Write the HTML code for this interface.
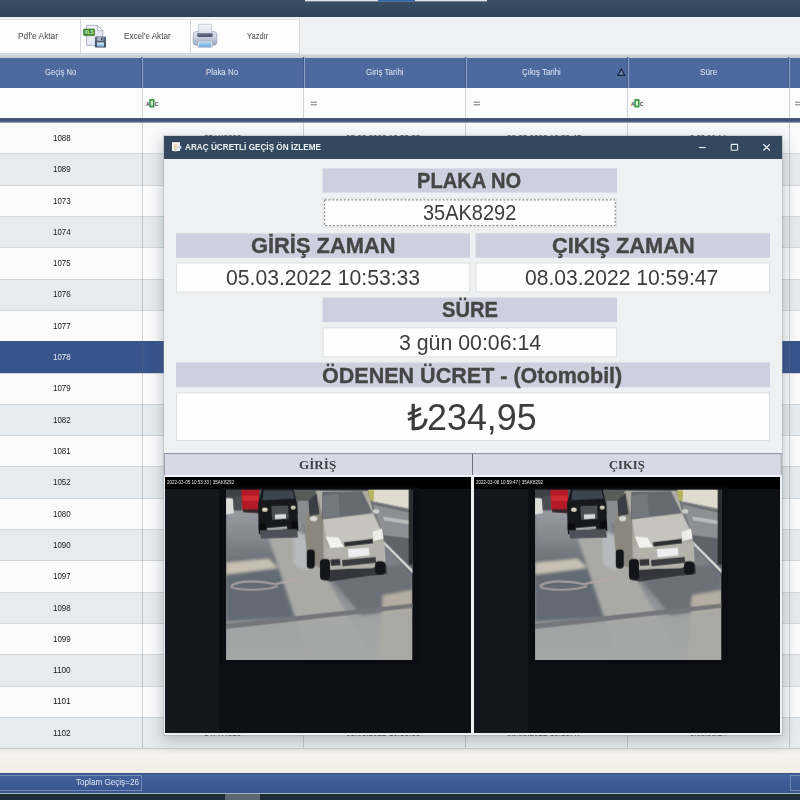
<!DOCTYPE html>
<html>
<head>
<meta charset="utf-8">
<title>Araç Ücretli Geçiş Ön İzleme</title>
<style>
*{box-sizing:border-box;margin:0;padding:0}
html,body{width:800px;height:800px;overflow:hidden}
body{position:relative;background:#eef0f1;font-family:"Liberation Sans",sans-serif;color:#222}
.abs{position:absolute}
.t{position:absolute;white-space:nowrap;line-height:1;transform-origin:0 0}
#topbar{left:0;top:0;width:800px;height:17px;background:linear-gradient(#3a4e66,#34485f 50%,#2f4358)}
#tab1{left:305px;top:0;width:182px;height:2px;background:linear-gradient(#dfe4e9 50%,rgba(223,228,233,.35) 50%)}
#tab2{left:378px;top:0;width:37px;height:2px;background:linear-gradient(#2f64a8 50%,rgba(47,100,168,.45) 50%)}
#tbline{left:0;top:54px;width:800px;height:4px;background:linear-gradient(#e2e5e8,#cdd2d7 40%,#c6ccd2)}
.btn{top:19px;height:35px;background:#fdfdfd;border:1px solid #d3d7da;border-top-color:#e3e6e8}
#hdr{left:0;top:58px;width:800px;height:30px;background:#4d6a9f}
.vsepH{top:57px;width:2px;height:31px;background:linear-gradient(90deg,#405785 50%,#8fa5cb 50%)}
#filter{left:0;top:88px;width:800px;height:31px;background:#fcfcfd}
#darksep{left:0;top:118px;width:800px;height:5px;background:linear-gradient(#4a5d7c,#3b4e6e 40%,#56688a 75%,#b9c2d0)}
.row{left:0;width:800px;border-top:1px solid #d0d6da}
.row.w{background:#fbfbfc}
.row.g{background:#e7ebed}
.row.s{background:#37548b;border-top-color:#37548b}
.vsep{top:88px;width:1px;height:660px;background:rgba(100,115,130,.30)}
#cream{left:0;top:748px;width:800px;height:25px;border-top:1px solid #c6cacd;background:linear-gradient(#e9e8e2,#f5f4ee 22%,#f3f1e8 70%,#f1eee3)}
#foot{left:0;top:773px;width:800px;height:20px;background:linear-gradient(#4564a0,#3d5c95 45%,#38558d);border-top:1px solid #32507f}
#bottom{left:0;top:793px;width:800px;height:7px;background:#1d2c36;border-top:1px solid #aab3bb}
#dlg{left:164px;top:136px;width:618px;height:599px;background:#eef0f1;box-shadow:0 0 0 1px rgba(150,158,166,.35),0 4px 13px 2px rgba(70,80,90,.30)}
#ttl{left:164px;top:136px;width:618px;height:23px;background:#33475f}
.lab{position:absolute;background:#cfd0df;height:24px}
.val{position:absolute;background:#fefefe;border:1px solid #dadde0;height:30px}
.gh{position:absolute;background:#d7d8e6;border-top:1px solid #8f909a;height:22px}
.cam{position:absolute;background:#0e1016;overflow:hidden}
</style>
</head>
<body>
<div id="topbar" class="abs"></div>
<div id="tab1" class="abs"></div>
<div id="tab2" class="abs"></div>
<div class="abs btn" style="left:-20px;width:101px"></div>
<div class="abs btn" style="left:80px;width:111px"></div>
<div class="abs btn" style="left:190px;width:110px"></div>
<div id="tbline" class="abs"></div>
<div id="hdr" class="abs"></div>
<div class="abs vsepH" style="left:141px"></div>
<div class="abs vsepH" style="left:303px"></div>
<div class="abs vsepH" style="left:465px"></div>
<div class="abs vsepH" style="left:627px"></div>
<div class="abs vsepH" style="left:788px"></div>
<svg class="abs" style="left:617px;top:68px" width="9" height="9" viewBox="0 0 9 9"><path d="M4.3 1.3 L7.7 7.3 H0.9 Z" fill="rgba(255,255,255,.22)" stroke="#18233c" stroke-width="1.25"/></svg>
<div id="filter" class="abs"></div>
<!-- filter row icons -->
<svg class="abs" style="left:145px;top:98px" width="14" height="10" viewBox="0 0 14 10">
  <rect x="4.2" y="1" width="5.4" height="8.4" rx="0.9" fill="#3c9a4a"/>
  <rect x="5.8" y="2.8" width="2.2" height="4.8" fill="#d6efd9"/>
  <text x="1" y="7.6" font-family="Liberation Sans" font-size="5" font-weight="bold" fill="#444">A</text>
  <text x="9.8" y="7.6" font-family="Liberation Sans" font-size="5" font-weight="bold" fill="#444">C</text>
</svg>
<svg class="abs" style="left:630px;top:98px" width="14" height="10" viewBox="0 0 14 10">
  <rect x="4.2" y="1" width="5.4" height="8.4" rx="0.9" fill="#3c9a4a"/>
  <rect x="5.8" y="2.8" width="2.2" height="4.8" fill="#d6efd9"/>
  <text x="1" y="7.6" font-family="Liberation Sans" font-size="5" font-weight="bold" fill="#444">A</text>
  <text x="9.8" y="7.6" font-family="Liberation Sans" font-size="5" font-weight="bold" fill="#444">C</text>
</svg>
<svg class="abs" style="left:298.5px;top:95.5px" width="502" height="14" viewBox="0 0 500 14" stroke="#666" stroke-width="0.9">
  <path d="M10.6 6.2 H17 M10.6 8.8 H17"/>
  <path d="M173.6 6.2 H180 M173.6 8.8 H180"/>
  <path d="M495 6.2 H501 M495 8.8 H501"/>
</svg>
<!-- excel icon -->
<svg class="abs" style="left:82px;top:23px" width="26" height="26" viewBox="0 0 26 26">
  <defs>
    <linearGradient id="pg" x1="0" y1="0" x2="1" y2="1"><stop offset="0" stop-color="#f4f5fa"/><stop offset="1" stop-color="#dcdff0"/></linearGradient>
    <linearGradient id="fl" x1="0" y1="0" x2="0" y2="1"><stop offset="0" stop-color="#5f6b7e"/><stop offset="1" stop-color="#39455a"/></linearGradient>
    <linearGradient id="bl" x1="0" y1="0" x2="0" y2="1"><stop offset="0" stop-color="#d8ecf8"/><stop offset="1" stop-color="#7fb4d8"/></linearGradient>
  </defs>
  <path d="M4.6 2.4 H15.4 L20.8 7.6 V22.4 H4.6 Z" fill="url(#pg)" stroke="#a9aec2" stroke-width="0.9"/>
  <path d="M15.4 2.4 V7.6 H20.8 Z" fill="#f8f9fc" stroke="#a9aec2" stroke-width="0.8"/>
  <rect x="1.6" y="6" width="11" height="6.6" rx="0.8" fill="#3f8a28" stroke="#2f6d1d" stroke-width="0.6"/>
  <text x="7.1" y="11.2" font-family="Liberation Sans" font-weight="bold" font-size="4.8" fill="#d4ecc4" text-anchor="middle">XLS</text>
  <rect x="13" y="13.6" width="11" height="10.8" rx="1" fill="url(#fl)"/>
  <rect x="15.2" y="14.2" width="6.2" height="3.6" fill="#aab4c6"/>
  <rect x="19" y="14.7" width="1.5" height="2.4" fill="#39455a"/>
  <rect x="14.9" y="19.4" width="7.2" height="4.2" fill="url(#bl)"/>
</svg>
<!-- printer icon -->
<svg class="abs" style="left:192px;top:23px" width="26" height="26" viewBox="0 0 26 26">
  <defs>
    <linearGradient id="pp" x1="0" y1="0" x2="0" y2="1"><stop offset="0" stop-color="#f7f8fc"/><stop offset="1" stop-color="#d9dcec"/></linearGradient>
    <linearGradient id="pb" x1="0" y1="0" x2="0" y2="1"><stop offset="0" stop-color="#e4e8f2"/><stop offset="0.5" stop-color="#c3cadb"/><stop offset="1" stop-color="#9aa5be"/></linearGradient>
    <linearGradient id="ps" x1="0" y1="0" x2="0" y2="1"><stop offset="0" stop-color="#6c7690"/><stop offset="1" stop-color="#4a546e"/></linearGradient>
    <linearGradient id="pt" x1="0" y1="0" x2="0" y2="1"><stop offset="0" stop-color="#bfe0f6"/><stop offset="1" stop-color="#5fa5dc"/></linearGradient>
  </defs>
  <rect x="1.2" y="8.6" width="23.6" height="13.6" rx="3" fill="url(#pb)" stroke="#97a1b8" stroke-width="0.7"/>
  <rect x="6.4" y="1.3" width="13.2" height="9.4" rx="0.8" fill="url(#pp)" stroke="#b3b8cb" stroke-width="0.7"/>
  <path d="M5.2 10.2 H20.8 V12.6 Q20.8 14 19.4 14 H6.6 Q5.2 14 5.2 12.6 Z" fill="url(#ps)"/>
  <rect x="5.6" y="18.2" width="14.8" height="6.2" rx="0.8" fill="#e6eaf2" stroke="#9aa4bb" stroke-width="0.6"/>
  <rect x="6.8" y="18.8" width="12.4" height="5" fill="url(#pt)"/>
</svg>
<span class="t" style="left:17.55px;top:32px;font-size:9px;color:#454545;transform:scaleX(0.9258);">Pdf'e Aktar</span>
<span class="t" style="left:123.87px;top:32px;font-size:9px;color:#454545;transform:scaleX(0.9011);">Excel'e Aktar</span>
<span class="t" style="left:247.38px;top:32px;font-size:9px;color:#454545;transform:scaleX(0.8347);">Yazdır</span>
<span class="t" style="left:44.84px;top:68px;font-size:8.8px;color:#e4e9f2;transform:scaleX(0.8639);">Geçiş No</span>
<span class="t" style="left:206.18px;top:68px;font-size:8.8px;color:#e4e9f2;transform:scaleX(0.8972);">Plaka No</span>
<span class="t" style="left:365.62px;top:68px;font-size:8.8px;color:#e4e9f2;transform:scaleX(0.9096);">Giriş Tarihi</span>
<span class="t" style="left:522.43px;top:68px;font-size:8.8px;color:#e4e9f2;transform:scaleX(0.8959);">Çıkış Tarihi</span>
<span class="t" style="left:699.54px;top:68px;font-size:8.8px;color:#e4e9f2;transform:scaleX(0.9300);">Süre</span>
<div class="abs row w" style="top:122px;height:31px"></div>
<div class="abs row g" style="top:153px;height:32px"></div>
<div class="abs row w" style="top:185px;height:31px"></div>
<div class="abs row g" style="top:216px;height:31px"></div>
<div class="abs row w" style="top:247px;height:32px"></div>
<div class="abs row g" style="top:279px;height:31px"></div>
<div class="abs row w" style="top:310px;height:31px"></div>
<div class="abs row s" style="top:341px;height:32px"></div>
<div class="abs row w" style="top:373px;height:31px"></div>
<div class="abs row g" style="top:404px;height:31px"></div>
<div class="abs row w" style="top:435px;height:31px"></div>
<div class="abs row g" style="top:466px;height:32px"></div>
<div class="abs row w" style="top:498px;height:31px"></div>
<div class="abs row g" style="top:529px;height:31px"></div>
<div class="abs row w" style="top:560px;height:32px"></div>
<div class="abs row g" style="top:592px;height:31px"></div>
<div class="abs row w" style="top:623px;height:31px"></div>
<div class="abs row g" style="top:654px;height:32px"></div>
<div class="abs row w" style="top:686px;height:31px"></div>
<div class="abs row g" style="top:717px;height:31px"></div>
<span class="t" style="left:52.70px;top:134px;font-size:8.4px;color:#161616;transform:scaleX(0.9483);">1088</span>
<span class="t" style="left:204.25px;top:134px;font-size:8.4px;color:#161616;transform:scaleX(0.9577);">35AK8292</span>
<span class="t" style="left:345.75px;top:134px;font-size:8.4px;color:#161616;transform:scaleX(0.9677);">05.03.2022 10:53:33</span>
<span class="t" style="left:506.75px;top:134px;font-size:8.4px;color:#161616;transform:scaleX(0.9677);">08.03.2022 10:59:47</span>
<span class="t" style="left:689.76px;top:134px;font-size:8.4px;color:#161616;transform:scaleX(0.9176);">3.00:06:14</span>
<span class="t" style="left:52.70px;top:165px;font-size:8.4px;color:#161616;transform:scaleX(0.9483);">1089</span>
<span class="t" style="left:204.25px;top:165px;font-size:8.4px;color:#161616;transform:scaleX(0.9432);">35KR1044</span>
<span class="t" style="left:345.75px;top:165px;font-size:8.4px;color:#161616;transform:scaleX(0.9677);">05.03.2022 10:53:33</span>
<span class="t" style="left:506.75px;top:165px;font-size:8.4px;color:#161616;transform:scaleX(0.9677);">08.03.2022 10:59:47</span>
<span class="t" style="left:689.76px;top:165px;font-size:8.4px;color:#161616;transform:scaleX(0.9176);">3.00:06:14</span>
<span class="t" style="left:52.70px;top:197px;font-size:8.4px;color:#161616;transform:scaleX(0.9483);">1073</span>
<span class="t" style="left:204.25px;top:197px;font-size:8.4px;color:#161616;transform:scaleX(0.9354);">35BTC702</span>
<span class="t" style="left:345.75px;top:197px;font-size:8.4px;color:#161616;transform:scaleX(0.9677);">05.03.2022 10:53:33</span>
<span class="t" style="left:506.75px;top:197px;font-size:8.4px;color:#161616;transform:scaleX(0.9677);">08.03.2022 10:59:47</span>
<span class="t" style="left:689.76px;top:197px;font-size:8.4px;color:#161616;transform:scaleX(0.9176);">3.00:06:14</span>
<span class="t" style="left:52.71px;top:228px;font-size:8.4px;color:#161616;transform:scaleX(0.9414);">1074</span>
<span class="t" style="left:204.25px;top:228px;font-size:8.4px;color:#161616;transform:scaleX(0.9577);">35AEL318</span>
<span class="t" style="left:345.75px;top:228px;font-size:8.4px;color:#161616;transform:scaleX(0.9677);">05.03.2022 10:53:33</span>
<span class="t" style="left:506.75px;top:228px;font-size:8.4px;color:#161616;transform:scaleX(0.9677);">08.03.2022 10:59:47</span>
<span class="t" style="left:689.76px;top:228px;font-size:8.4px;color:#161616;transform:scaleX(0.9176);">3.00:06:14</span>
<span class="t" style="left:52.70px;top:259px;font-size:8.4px;color:#161616;transform:scaleX(0.9483);">1075</span>
<span class="t" style="left:204.26px;top:259px;font-size:8.4px;color:#161616;transform:scaleX(0.9244);">35CKP551</span>
<span class="t" style="left:345.75px;top:259px;font-size:8.4px;color:#161616;transform:scaleX(0.9677);">05.03.2022 10:53:33</span>
<span class="t" style="left:506.75px;top:259px;font-size:8.4px;color:#161616;transform:scaleX(0.9677);">08.03.2022 10:59:47</span>
<span class="t" style="left:689.76px;top:259px;font-size:8.4px;color:#161616;transform:scaleX(0.9176);">3.00:06:14</span>
<span class="t" style="left:52.70px;top:290px;font-size:8.4px;color:#161616;transform:scaleX(0.9483);">1076</span>
<span class="t" style="left:204.25px;top:290px;font-size:8.4px;color:#161616;transform:scaleX(0.9432);">35NV2260</span>
<span class="t" style="left:345.75px;top:290px;font-size:8.4px;color:#161616;transform:scaleX(0.9677);">05.03.2022 10:53:33</span>
<span class="t" style="left:506.75px;top:290px;font-size:8.4px;color:#161616;transform:scaleX(0.9677);">08.03.2022 10:59:47</span>
<span class="t" style="left:689.76px;top:290px;font-size:8.4px;color:#161616;transform:scaleX(0.9176);">3.00:06:14</span>
<span class="t" style="left:52.70px;top:322px;font-size:8.4px;color:#161616;transform:scaleX(0.9483);">1077</span>
<span class="t" style="left:204.25px;top:322px;font-size:8.4px;color:#161616;transform:scaleX(0.9618);">35AYZ917</span>
<span class="t" style="left:345.75px;top:322px;font-size:8.4px;color:#161616;transform:scaleX(0.9677);">05.03.2022 10:53:33</span>
<span class="t" style="left:506.75px;top:322px;font-size:8.4px;color:#161616;transform:scaleX(0.9677);">08.03.2022 10:59:47</span>
<span class="t" style="left:689.76px;top:322px;font-size:8.4px;color:#161616;transform:scaleX(0.9176);">3.00:06:14</span>
<span class="t" style="left:52.70px;top:353px;font-size:8.4px;color:#e4e9f2;transform:scaleX(0.9483);">1078</span>
<span class="t" style="left:204.25px;top:353px;font-size:8.4px;color:#e4e9f2;transform:scaleX(0.9577);">35AK8292</span>
<span class="t" style="left:345.75px;top:353px;font-size:8.4px;color:#e4e9f2;transform:scaleX(0.9677);">05.03.2022 10:53:33</span>
<span class="t" style="left:506.75px;top:353px;font-size:8.4px;color:#e4e9f2;transform:scaleX(0.9677);">08.03.2022 10:59:47</span>
<span class="t" style="left:689.76px;top:353px;font-size:8.4px;color:#e4e9f2;transform:scaleX(0.9176);">3.00:06:14</span>
<span class="t" style="left:52.70px;top:384px;font-size:8.4px;color:#161616;transform:scaleX(0.9483);">1079</span>
<span class="t" style="left:204.26px;top:384px;font-size:8.4px;color:#161616;transform:scaleX(0.9138);">35BHU463</span>
<span class="t" style="left:345.75px;top:384px;font-size:8.4px;color:#161616;transform:scaleX(0.9677);">05.03.2022 10:53:33</span>
<span class="t" style="left:506.75px;top:384px;font-size:8.4px;color:#161616;transform:scaleX(0.9677);">08.03.2022 10:59:47</span>
<span class="t" style="left:689.76px;top:384px;font-size:8.4px;color:#161616;transform:scaleX(0.9176);">3.00:06:14</span>
<span class="t" style="left:52.70px;top:416px;font-size:8.4px;color:#161616;transform:scaleX(0.9483);">1082</span>
<span class="t" style="left:204.25px;top:416px;font-size:8.4px;color:#161616;transform:scaleX(0.9464);">35AR5107</span>
<span class="t" style="left:345.75px;top:416px;font-size:8.4px;color:#161616;transform:scaleX(0.9677);">05.03.2022 10:53:33</span>
<span class="t" style="left:506.75px;top:416px;font-size:8.4px;color:#161616;transform:scaleX(0.9677);">08.03.2022 10:59:47</span>
<span class="t" style="left:689.76px;top:416px;font-size:8.4px;color:#161616;transform:scaleX(0.9176);">3.00:06:14</span>
<span class="t" style="left:52.70px;top:447px;font-size:8.4px;color:#161616;transform:scaleX(0.9483);">1081</span>
<span class="t" style="left:204.25px;top:447px;font-size:8.4px;color:#161616;transform:scaleX(0.9464);">35DS7725</span>
<span class="t" style="left:345.75px;top:447px;font-size:8.4px;color:#161616;transform:scaleX(0.9677);">05.03.2022 10:53:33</span>
<span class="t" style="left:506.75px;top:447px;font-size:8.4px;color:#161616;transform:scaleX(0.9677);">08.03.2022 10:59:47</span>
<span class="t" style="left:689.76px;top:447px;font-size:8.4px;color:#161616;transform:scaleX(0.9176);">3.00:06:14</span>
<span class="t" style="left:52.70px;top:478px;font-size:8.4px;color:#161616;transform:scaleX(0.9483);">1052</span>
<span class="t" style="left:204.26px;top:478px;font-size:8.4px;color:#161616;transform:scaleX(0.9244);">35CBE138</span>
<span class="t" style="left:345.75px;top:478px;font-size:8.4px;color:#161616;transform:scaleX(0.9677);">05.03.2022 10:53:33</span>
<span class="t" style="left:506.75px;top:478px;font-size:8.4px;color:#161616;transform:scaleX(0.9677);">08.03.2022 10:59:47</span>
<span class="t" style="left:689.76px;top:478px;font-size:8.4px;color:#161616;transform:scaleX(0.9176);">3.00:06:14</span>
<span class="t" style="left:52.71px;top:510px;font-size:8.4px;color:#161616;transform:scaleX(0.9414);">1080</span>
<span class="t" style="left:204.26px;top:510px;font-size:8.4px;color:#161616;transform:scaleX(0.9323);">35AFN640</span>
<span class="t" style="left:345.75px;top:510px;font-size:8.4px;color:#161616;transform:scaleX(0.9677);">05.03.2022 10:53:33</span>
<span class="t" style="left:506.75px;top:510px;font-size:8.4px;color:#161616;transform:scaleX(0.9677);">08.03.2022 10:59:47</span>
<span class="t" style="left:689.76px;top:510px;font-size:8.4px;color:#161616;transform:scaleX(0.9176);">3.00:06:14</span>
<span class="t" style="left:52.71px;top:541px;font-size:8.4px;color:#161616;transform:scaleX(0.9414);">1090</span>
<span class="t" style="left:204.24px;top:541px;font-size:8.4px;color:#161616;transform:scaleX(0.9814);">35KL9032</span>
<span class="t" style="left:345.75px;top:541px;font-size:8.4px;color:#161616;transform:scaleX(0.9677);">05.03.2022 10:53:33</span>
<span class="t" style="left:506.75px;top:541px;font-size:8.4px;color:#161616;transform:scaleX(0.9677);">08.03.2022 10:59:47</span>
<span class="t" style="left:689.76px;top:541px;font-size:8.4px;color:#161616;transform:scaleX(0.9176);">3.00:06:14</span>
<span class="t" style="left:52.70px;top:572px;font-size:8.4px;color:#161616;transform:scaleX(0.9483);">1097</span>
<span class="t" style="left:204.26px;top:572px;font-size:8.4px;color:#161616;transform:scaleX(0.9321);">35BPV274</span>
<span class="t" style="left:345.75px;top:572px;font-size:8.4px;color:#161616;transform:scaleX(0.9677);">05.03.2022 10:53:33</span>
<span class="t" style="left:506.75px;top:572px;font-size:8.4px;color:#161616;transform:scaleX(0.9677);">08.03.2022 10:59:47</span>
<span class="t" style="left:689.76px;top:572px;font-size:8.4px;color:#161616;transform:scaleX(0.9176);">3.00:06:14</span>
<span class="t" style="left:52.70px;top:604px;font-size:8.4px;color:#161616;transform:scaleX(0.9483);">1098</span>
<span class="t" style="left:204.24px;top:604px;font-size:8.4px;color:#161616;transform:scaleX(0.9857);">35AT6186</span>
<span class="t" style="left:345.75px;top:604px;font-size:8.4px;color:#161616;transform:scaleX(0.9677);">05.03.2022 10:53:33</span>
<span class="t" style="left:506.75px;top:604px;font-size:8.4px;color:#161616;transform:scaleX(0.9677);">08.03.2022 10:59:47</span>
<span class="t" style="left:689.76px;top:604px;font-size:8.4px;color:#161616;transform:scaleX(0.9176);">3.00:06:14</span>
<span class="t" style="left:52.70px;top:635px;font-size:8.4px;color:#161616;transform:scaleX(0.9483);">1099</span>
<span class="t" style="left:204.26px;top:635px;font-size:8.4px;color:#161616;transform:scaleX(0.9138);">35CDY805</span>
<span class="t" style="left:345.75px;top:635px;font-size:8.4px;color:#161616;transform:scaleX(0.9677);">05.03.2022 10:53:33</span>
<span class="t" style="left:506.75px;top:635px;font-size:8.4px;color:#161616;transform:scaleX(0.9677);">08.03.2022 10:59:47</span>
<span class="t" style="left:689.76px;top:635px;font-size:8.4px;color:#161616;transform:scaleX(0.9176);">3.00:06:14</span>
<span class="t" style="left:52.69px;top:666px;font-size:8.4px;color:#161616;transform:scaleX(0.9752);">1100</span>
<span class="t" style="left:204.26px;top:666px;font-size:8.4px;color:#161616;transform:scaleX(0.9138);">35NM3391</span>
<span class="t" style="left:345.75px;top:666px;font-size:8.4px;color:#161616;transform:scaleX(0.9677);">05.03.2022 10:53:33</span>
<span class="t" style="left:506.75px;top:666px;font-size:8.4px;color:#161616;transform:scaleX(0.9677);">08.03.2022 10:59:47</span>
<span class="t" style="left:689.76px;top:666px;font-size:8.4px;color:#161616;transform:scaleX(0.9176);">3.00:06:14</span>
<span class="t" style="left:52.68px;top:697px;font-size:8.4px;color:#161616;transform:scaleX(0.9827);">1101</span>
<span class="t" style="left:204.25px;top:697px;font-size:8.4px;color:#161616;transform:scaleX(0.9696);">35BJE529</span>
<span class="t" style="left:345.75px;top:697px;font-size:8.4px;color:#161616;transform:scaleX(0.9677);">05.03.2022 10:53:33</span>
<span class="t" style="left:506.75px;top:697px;font-size:8.4px;color:#161616;transform:scaleX(0.9677);">08.03.2022 10:59:47</span>
<span class="t" style="left:689.76px;top:697px;font-size:8.4px;color:#161616;transform:scaleX(0.9176);">3.00:06:14</span>
<span class="t" style="left:52.68px;top:729px;font-size:8.4px;color:#161616;transform:scaleX(0.9827);">1102</span>
<span class="t" style="left:204.25px;top:729px;font-size:8.4px;color:#161616;transform:scaleX(0.9663);">34FK4820</span>
<span class="t" style="left:345.75px;top:729px;font-size:8.4px;color:#161616;transform:scaleX(0.9677);">05.03.2022 10:53:33</span>
<span class="t" style="left:506.75px;top:729px;font-size:8.4px;color:#161616;transform:scaleX(0.9677);">08.03.2022 10:59:47</span>
<span class="t" style="left:689.76px;top:729px;font-size:8.4px;color:#161616;transform:scaleX(0.9176);">3.00:06:14</span>
<div class="abs vsep" style="left:142px"></div><div class="abs vsep" style="left:303px"></div><div class="abs vsep" style="left:465px"></div><div class="abs vsep" style="left:627px"></div><div class="abs vsep" style="left:789px"></div>
<div id="darksep" class="abs"></div>
<div id="cream" class="abs"></div>
<div id="foot" class="abs">
  <div class="abs" style="left:-5px;top:1px;width:147px;height:16px;border:1px solid #6f88b6"></div>
  <div class="abs" style="left:790px;top:1px;width:20px;height:16px;border:1px solid #6f88b6"></div>
</div>
<div id="bottom" class="abs"><div class="abs" style="left:225px;top:0;width:35px;height:7px;background:#5b6870"></div></div>
<span class="t" style="left:76.27px;top:778px;font-size:8.8px;color:#e4e9f2;transform:scaleX(0.9226);">Toplam Geçiş=26</span>
<div id="dlg" class="abs"></div>
<div id="ttl" class="abs"></div>
<svg class="abs" style="left:164px;top:136px" width="618" height="598" viewBox="164 136 618 598">
  <g fill="#cfd0df">
    <rect x="322.5" y="168.4" width="294.5" height="24.2"/>
    <rect x="176" y="233.3" width="294" height="24.4"/>
    <rect x="475.6" y="233.3" width="294.4" height="24.4"/>
    <rect x="322.5" y="297.5" width="294.5" height="24.6"/>
    <rect x="176" y="362.5" width="594" height="24.8"/>
  </g>
  <g fill="#fefefe" stroke="#dcdfe2" stroke-width="1">
    <rect x="323" y="198.3" width="293.6" height="28.8"/>
    <rect x="176.5" y="263" width="293.2" height="29"/>
    <rect x="476" y="263" width="293.6" height="29"/>
    <rect x="323" y="327.8" width="293.6" height="29"/>
    <rect x="176.5" y="392.8" width="593" height="47.8"/>
  </g>
  <rect x="324.6" y="199.9" width="290.6" height="25.8" fill="none" stroke="#6a6a6a" stroke-width="0.9" stroke-dasharray="2.2 1.6"/>
  <!-- group headers -->
  <rect x="164" y="453.4" width="617.6" height="21.8" fill="#d8d9e6"/>
  <path d="M164 453.6 H781.6" stroke="#8e8f99" stroke-width="1"/>
  <path d="M164.5 453.4 V475 M781.2 453.4 V475" stroke="#a0a1ab" stroke-width="1"/>
  <path d="M472.6 453.4 V475" stroke="#6d6e78" stroke-width="1.2"/>
  <path d="M473.8 454 V475" stroke="#eeeef4" stroke-width="0.8"/>
  <path d="M164 475.8 H781.6" stroke="#f7f7f9" stroke-width="1.2"/>
</svg>
<div class="cam" style="left:165px;top:477px;width:306px;height:256px"><div class="abs" style="left:0;top:0;width:54px;height:256px;background:#14171d"></div><div class="abs" style="left:0;top:0;width:306px;height:12px;background:#000"></div></div>
<div class="cam" style="left:474px;top:477px;width:306px;height:256px"><div class="abs" style="left:0;top:0;width:54px;height:256px;background:#14171d"></div><div class="abs" style="left:0;top:0;width:306px;height:12px;background:#000"></div></div>
<svg class="abs" style="left:690px;top:136px" width="92" height="23" viewBox="0 0 92 23" fill="none" stroke="#e9edf2" stroke-width="1.1">
  <path d="M9 11.5 H15.8"/>
  <rect x="41.2" y="8.4" width="6.4" height="5.8" rx="0.8"/>
  <path d="M73.4 8.3 L79.8 14.5 M79.8 8.3 L73.4 14.5" stroke-width="1.2"/>
</svg>
<svg class="abs" style="left:171px;top:141px" width="12" height="12" viewBox="0 0 12 12">
  <rect x="1" y="1.2" width="8" height="8.8" fill="#f3f4f6"/>
  <rect x="2.6" y="3" width="4" height="5.2" fill="#e4d9b8"/>
  <rect x="3.6" y="8" width="2" height="2.6" fill="#d9cfae"/>
  <circle cx="8.9" cy="6.5" r="1.7" fill="#bcd8f2"/>
</svg>
<svg width="0" height="0" style="position:absolute">
  <defs>
    <filter id="bl" x="-5%" y="-5%" width="110%" height="110%"><feGaussianBlur stdDeviation="3.2"/></filter>
    <filter id="bl2" x="-5%" y="-5%" width="110%" height="110%"><feGaussianBlur stdDeviation="7"/></filter>
    <clipPath id="pc"><rect x="42" y="18" width="710" height="649"/></clipPath>
    <linearGradient id="rd" x1="0" y1="0" x2="0" y2="1"><stop offset="0" stop-color="#6f747b"/><stop offset="0.45" stop-color="#7d8187"/><stop offset="0.8" stop-color="#9c9e9f"/><stop offset="1" stop-color="#a6a8a8"/></linearGradient>
    <linearGradient id="ul" gradientUnits="userSpaceOnUse" x1="0" y1="95" x2="0" y2="290"><stop offset="0" stop-color="#979ba1"/><stop offset="0.55" stop-color="#83878e"/><stop offset="1" stop-color="#6c7178"/></linearGradient>
    <g id="photo">
      <rect x="18" y="10" width="760" height="672" fill="#0b0d12"/>
      <g clip-path="url(#pc)">
        <rect x="42" y="18" width="710" height="649" fill="url(#rd)"/>
        <g filter="url(#bl2)">
          <polygon points="42,95 330,95 345,300 42,300" fill="url(#ul)"/>
          <polygon points="42,335 330,300 420,500 42,520" fill="#646a73"/>
          <polygon points="200,190 330,180 600,667 360,667" fill="#a9a9a6"/>
          <polygon points="420,330 752,300 752,470 560,500" fill="#6d7077"/>
          <polygon points="640,420 752,400 752,667 620,667" fill="#b3aea1"/>
          <polygon points="42,550 752,475 752,667 42,667" fill="#a4a6a6" opacity=".75"/>
          <polygon points="42,296 205,281 240,316 42,341" fill="#c6c1b2"/>
          <polygon points="300,180 348,190 350,330 300,300" fill="#b7babc"/>
        </g>
        <g filter="url(#bl)">
          <polygon points="42,528 752,452 752,468 42,548" fill="#74767a"/>
          <path d="M60 385 C90 360 180 365 230 378 C280 365 330 360 345 350" fill="none" stroke="#b5aaab" stroke-width="8" opacity=".8"/>
          <path d="M60 388 C100 405 200 400 240 385" fill="none" stroke="#b5aaab" stroke-width="7" opacity=".8"/>
          <!-- background top -->
          <polygon points="42,18 752,18 752,60 42,60" fill="#4c5258"/>
          <polygon points="300,18 400,18 345,120 312,112" fill="#565c58"/>
          <polygon points="315,60 385,60 345,150 318,135" fill="#8a8d90"/>
          <!-- right pavement -->
          <polygon points="585,18 752,18 752,92 600,62" fill="#e0dccd"/>
          <polygon points="583,20 606,20 604,62 588,58" fill="#b4b45c"/>
          <polygon points="600,62 752,92 752,335 640,190" fill="#8d8f92"/>
          <polygon points="640,190 752,205 752,345 655,240" fill="#5f6268"/>
          <polygon points="600,66 752,98 752,108 604,74" fill="#6a6d70"/>
          <polygon points="645,215 752,322 752,336 645,228" fill="#d6d6d2"/>
          <polygon points="640,120 740,135 742,150 645,135" fill="#b9bbbb"/>
          <rect x="738" y="18" width="16" height="285" fill="#2a2c2e"/>
          <!-- far left cars -->
          <polygon points="42,48 68,52 72,108 42,112" fill="#dcdcd8"/>
          <polygon points="68,36 102,36 102,96 72,96" fill="#4a4c52"/>
          <polygon points="42,18 100,18 100,40 42,50" fill="#3e4248"/>
          <!-- red van -->
          <polygon points="100,18 168,18 168,96 104,96" fill="#b31a26"/>
          <polygon points="104,40 165,40 165,62 104,60" fill="#cf2a36"/>
          <polygon points="106,92 168,92 168,108 108,104" fill="#3a2326"/>
          <!-- black car -->
          <polygon points="178,18 300,18 312,70 318,172 300,182 182,188 166,170 164,70" fill="#17181b"/>
          <polygon points="186,20 296,20 303,52 180,58" fill="#3d444d"/>
          <polygon points="214,80 279,78 281,129 218,133" fill="#4c4e53"/>
          <polygon points="197,164 274,157 276,168 199,176" fill="#a6a6a6"/>
          <polygon points="228,112 270,110 271,128 229,130" fill="#d9dadc"/>
          <ellipse cx="190" cy="94" rx="11" ry="8" fill="#d8d4bc"/>
          <ellipse cx="298" cy="86" rx="10" ry="8" fill="#c9c6b4"/>
          <rect x="167" y="146" width="27" height="42" rx="7" fill="#0c0c0e"/>
          <rect x="291" y="136" width="24" height="40" rx="7" fill="#0c0c0e"/>
          <!-- shadow under silver car -->
          <polygon points="400,330 652,300 655,338 560,350 440,368 405,360" fill="#34363a"/>
          <polygon points="170,172 312,168 316,200 176,204" fill="#4d5056"/>
          <!-- silver car -->
          <polygon points="385,22 582,22 604,108 640,188 648,290 600,316 420,322 352,292 344,180 348,118" fill="#adaba3"/>
          <polygon points="348,118 385,22 412,130 414,322 352,292 344,180" fill="#8a877e"/>
          <polygon points="356,60 386,30 398,110 360,118" fill="#3a3e44"/>
          <polygon points="409,26 560,23 600,107 407,130" fill="#666a70"/>
          <polygon points="412,40 470,34 476,118 410,126" fill="#7c8085" opacity=".7"/>
          <polygon points="412,132 602,110 640,190 560,212 470,218 424,200" fill="#c5c4be"/>
          <polygon points="420,238 646,214 650,290 600,316 422,322" fill="#b3b2ab"/>
          <polygon points="422,196 470,200 492,236 440,240" fill="#f1f1ee"/>
          <polygon points="600,178 636,166 642,204 604,214" fill="#ecece9"/>
          <polygon points="492,218 600,206 602,222 494,234" fill="#2c2e32"/>
          <polygon points="506,244 586,239 589,268 509,276" fill="#ecedef"/>
          <polygon points="484,286 612,274 614,296 486,310" fill="#3a3c40"/>
          <polygon points="440,284 476,282 478,306 442,308" fill="#33353a"/>
          <rect x="350" y="246" width="30" height="72" rx="12" fill="#141518"/>
          <rect x="400" y="282" width="38" height="80" rx="14" fill="#141518"/>
          <rect x="610" y="290" width="38" height="52" rx="14" fill="#141518"/>
          <ellipse cx="376" cy="128" rx="14" ry="10" fill="#d7d7d3"/>
          <ellipse cx="614" cy="100" rx="12" ry="9" fill="#cfcfcb"/>
        </g>
      </g>
    </g>
  </defs>
</svg>
<svg class="abs" style="left:215px;top:485px" width="210" height="185" viewBox="0 0 800 705"><use href="#photo"/></svg>
<svg class="abs" style="left:524px;top:485px" width="210" height="185" viewBox="0 0 800 705"><use href="#photo"/></svg>
<!-- lira sign -->
<svg class="abs" style="left:405px;top:402px" width="24" height="30" viewBox="0 0 24 30" fill="none" stroke="#3c3c3c">
  <path d="M8.2 1.8 V28.2" stroke-width="3.3"/>
  <path d="M3 12.2 L16 6.2 M3 17.7 L16 11.7" stroke-width="2.7"/>
  <path d="M8.2 26.6 H10.5 C16.5 26.6 20.6 22.6 21 16.6" stroke-width="3.2"/>
</svg>
<span class="t" style="left:185.47px;top:143px;font-size:8.8px;color:#f1f3f6;font-weight:bold;transform:scaleX(0.9300);">ARAÇ ÜCRETLİ GEÇİŞ ÖN İZLEME</span>
<span class="t" style="left:417.24px;top:170px;font-size:21.2px;color:#464646;font-weight:bold;transform:scaleX(0.9477);-webkit-text-stroke:0.35px #464646;">PLAKA NO</span>
<span class="t" style="left:422.98px;top:203px;font-size:21.4px;color:#3c3c3c;transform:scaleX(0.9337);">35AK8292</span>
<span class="t" style="left:250.52px;top:235px;font-size:21.2px;color:#464646;font-weight:bold;transform:scaleX(1.0312);-webkit-text-stroke:0.35px #464646;">GİRİŞ ZAMAN</span>
<span class="t" style="left:551.72px;top:235px;font-size:21.2px;color:#464646;font-weight:bold;transform:scaleX(1.0270);-webkit-text-stroke:0.35px #464646;">ÇIKIŞ ZAMAN</span>
<span class="t" style="left:226.14px;top:268px;font-size:21.4px;color:#3c3c3c;transform:scaleX(0.9891);">05.03.2022 10:53:33</span>
<span class="t" style="left:525.34px;top:268px;font-size:21.4px;color:#3c3c3c;transform:scaleX(0.9845);">08.03.2022 10:59:47</span>
<span class="t" style="left:441.59px;top:299px;font-size:21.2px;color:#464646;font-weight:bold;transform:scaleX(0.9498);-webkit-text-stroke:0.35px #464646;">SÜRE</span>
<span class="t" style="left:398.53px;top:333px;font-size:21.4px;color:#3c3c3c;transform:scaleX(0.9958);">3 gün 00:06:14</span>
<span class="t" style="left:322.33px;top:365px;font-size:21.2px;color:#464646;font-weight:bold;transform:scaleX(1.0164);-webkit-text-stroke:0.35px #464646;">ÖDENEN ÜCRET - (Otomobil)</span>
<span class="t" style="left:427.32px;top:399px;font-size:37.2px;color:#3c3c3c;transform:scaleX(0.9645);">234,95</span>
<span class="t" style="left:299.28px;top:458px;font-size:13.4px;color:#3e3e44;font-weight:bold;font-family:'Liberation Serif',serif;transform:scaleX(0.9807);">GİRİŞ</span>
<span class="t" style="left:609.31px;top:458px;font-size:13.4px;color:#3e3e44;font-weight:bold;font-family:'Liberation Serif',serif;transform:scaleX(0.9399);">ÇIKIŞ</span>
<span class="t" style="left:166.79px;top:479px;font-size:6.2px;color:#e8e8e8;transform:scaleX(0.7326);">2022-03-05 10:53:33 | 35AK8292</span>
<span class="t" style="left:475.99px;top:479px;font-size:6.2px;color:#e8e8e8;transform:scaleX(0.7326);">2022-03-08 10:59:47 | 35AK8292</span>
</body>
</html>
